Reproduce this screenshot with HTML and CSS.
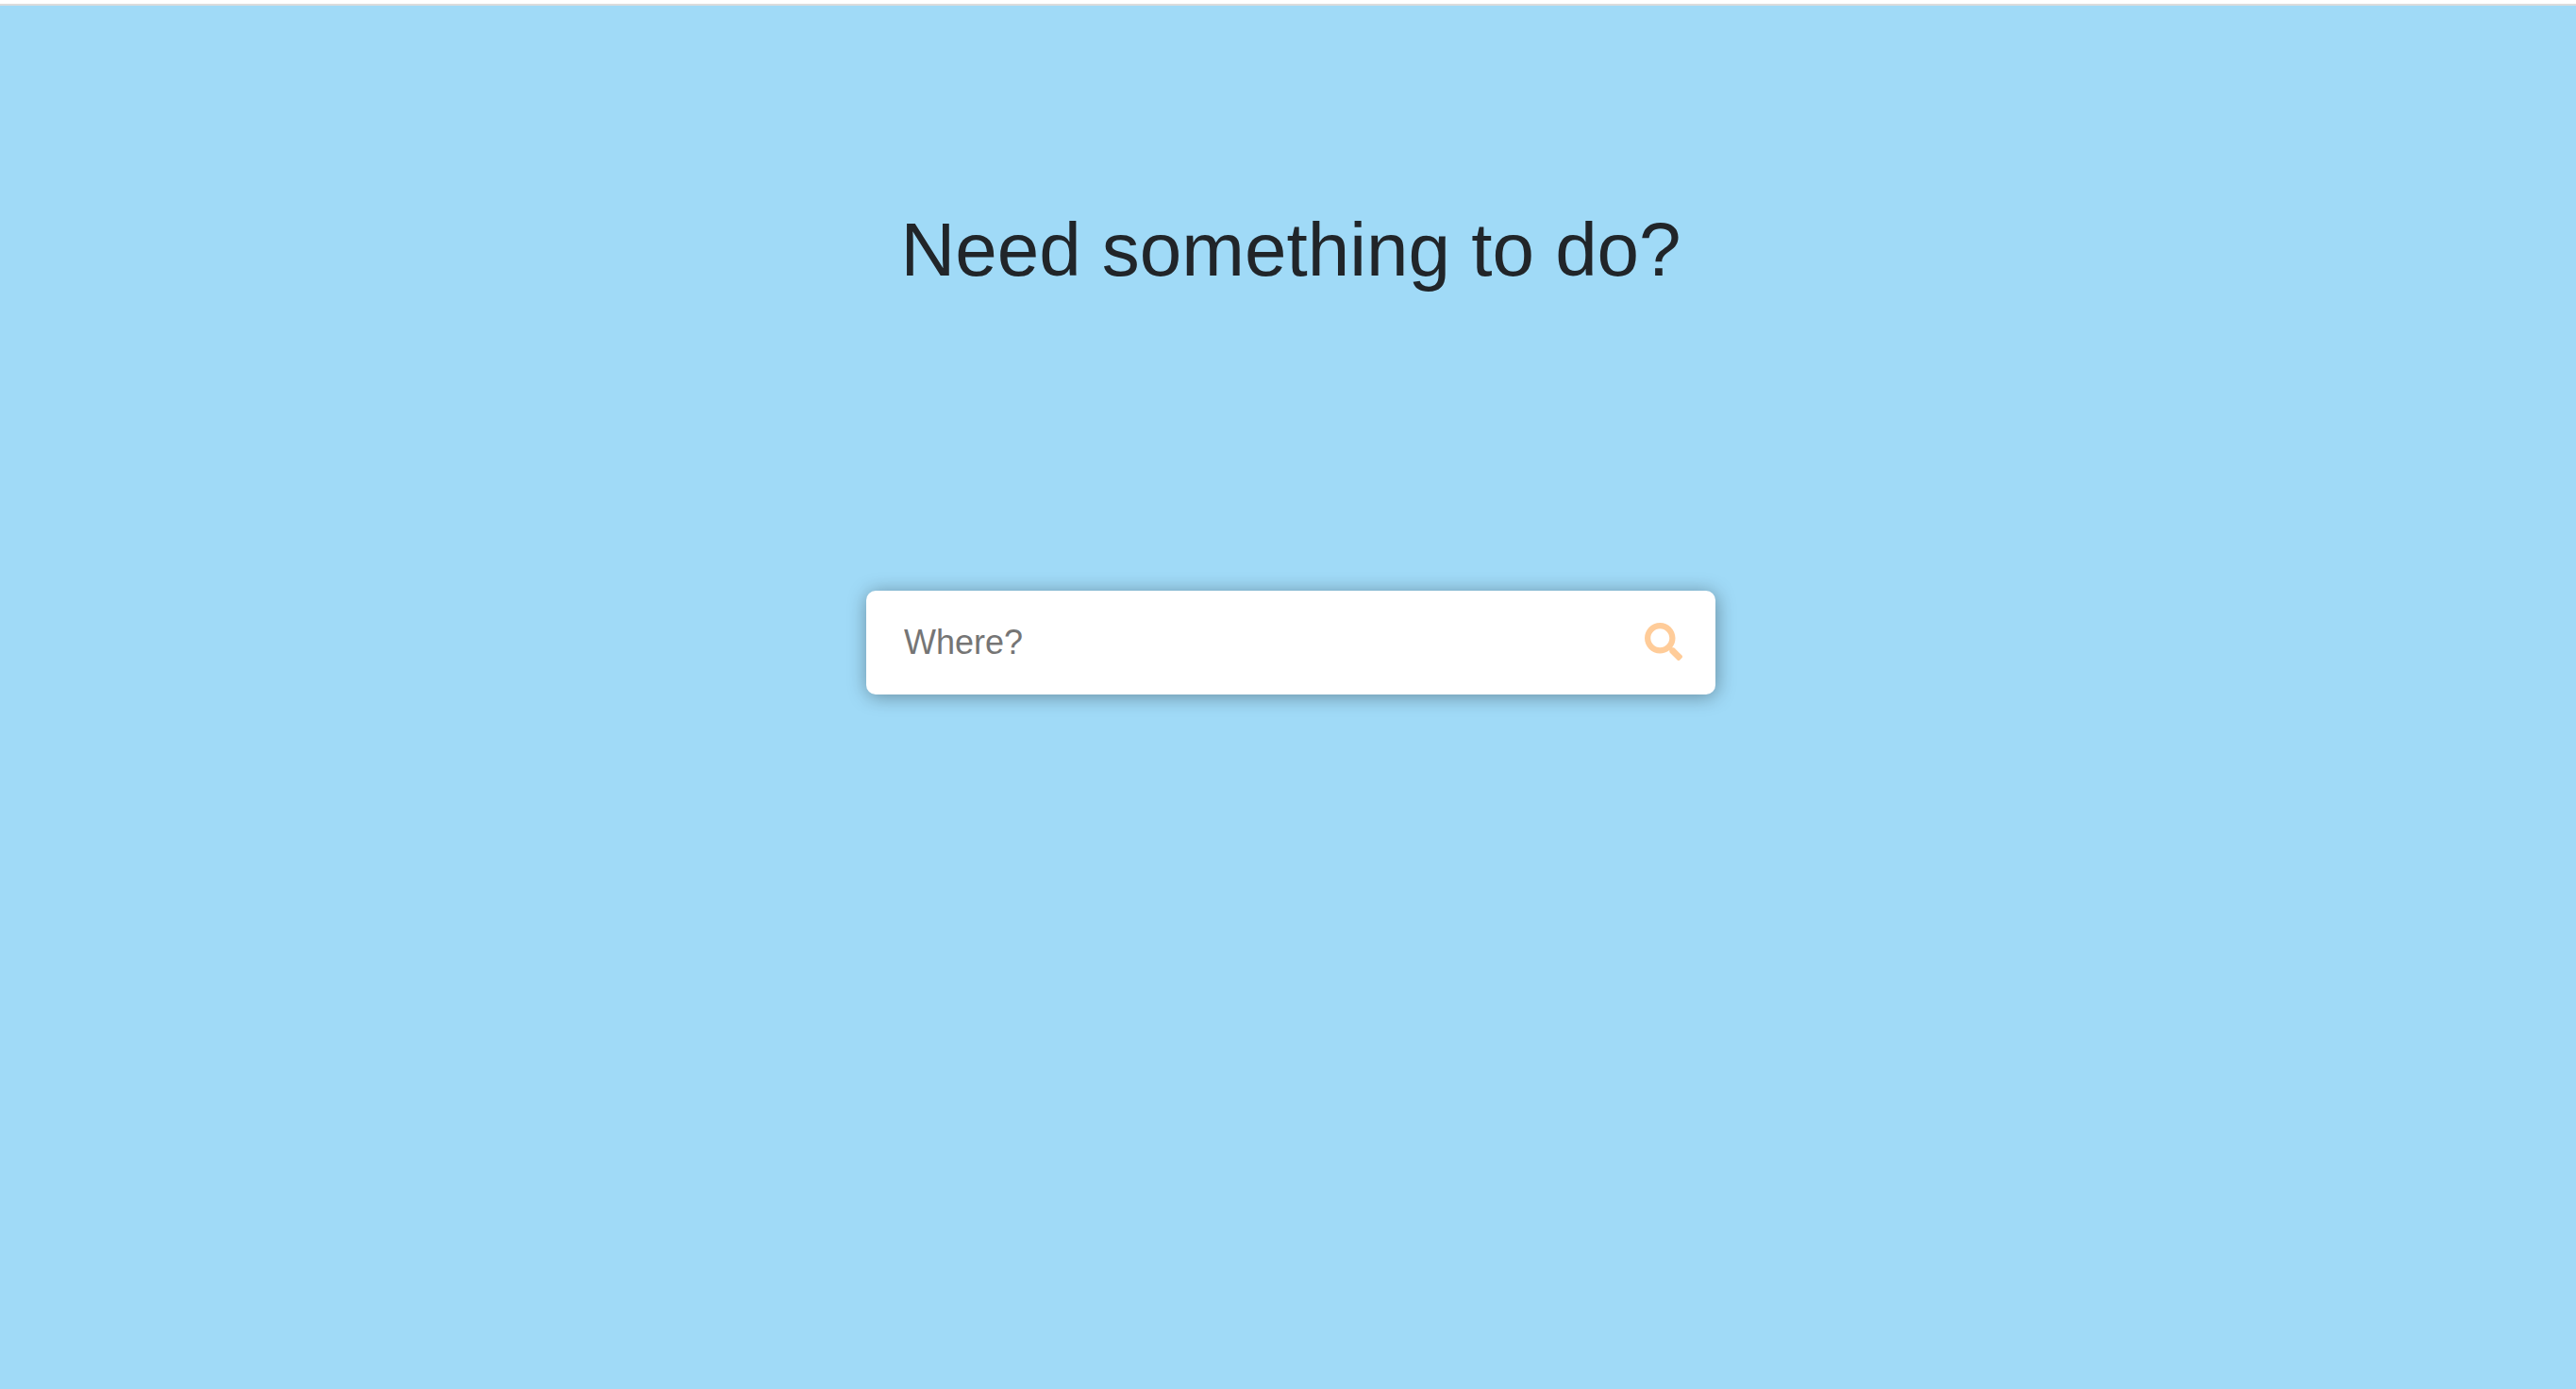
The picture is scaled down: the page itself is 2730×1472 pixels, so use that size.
FILE: index.html
```html
<!DOCTYPE html>
<html lang="en">
<head>
<meta charset="utf-8">
<meta name="viewport" content="width=device-width, initial-scale=1">
<title>Need something to do?</title>
<link rel="stylesheet" href="styles.css">
</head>
<body>
<main class="page">
  <h1 class="title">Need something to do?</h1>
  <form class="search" role="search">
    <input class="search-input" type="text" placeholder="Where?" aria-label="Where?">
    <button class="search-button" type="submit" aria-label="Search">
      <svg class="search-icon" viewBox="0 0 512 512" aria-hidden="true"><path fill="currentColor" d="M505 442.700L405.300 343c-4.500-4.500-10.600-7-17-7H372c27.600-35.300 44-79.700 44-128C416 93.100 322.900 0 208 0S0 93.100 0 208s93.100 208 208 208c48.300 0 92.700-16.400 128-44v16.300c0 6.400 2.500 12.500 7 17l99.700 99.700c9.400 9.400 24.600 9.400 33.900 0l28.300-28.300c9.400-9.400 9.400-24.600.1-34zM208 336c-70.700 0-128-57.200-128-128 0-70.700 57.200-128 128-128 70.700 0 128 57.200 128 128 0 70.700-57.200 128-128 128z"/></svg>
    </button>
  </form>
</main>
</body>
</html>
```
FILE: styles.css
```css
* {
  box-sizing: border-box;
}

html {
  background: #fff;
}

body {
  margin: 0;
  padding-top: 4px;
  font-family: "Liberation Sans", Arial, sans-serif;
  color: #212529;
}

.page {
  display: flex;
  flex-direction: column;
  align-items: center;
  min-height: calc(100vh - 4px);
  padding: 211px 0 0 6px;
  border-top: 2px solid #dcdcdc;
  background: #a0daf7;
}

.title {
  margin: 0 0 313px;
  font-size: 80px;
  font-weight: 400;
  line-height: 96px;
  text-align: center;
}

.search {
  display: flex;
  align-items: center;
  width: 900px;
  max-width: 100%;
  padding: 0 35px 0 40px;
  border-radius: 10px;
  background: #fff;
  box-shadow: 1px 2px 20px rgba(0, 0, 0, 0.36);
}

.search-input {
  flex: 1;
  min-width: 0;
  height: 110px;
  padding: 0;
  border: 0;
  outline: 0;
  background: transparent;
  font: inherit;
  font-size: 36px;
}

.search-input::placeholder {
  color: #757575;
  opacity: 1;
}

.search-button {
  display: flex;
  padding: 0 0 2px;
  border: 0;
  background: transparent;
  color: #ffcc99;
  cursor: pointer;
}

.search-icon {
  width: 40px;
  height: 40px;
}
```
